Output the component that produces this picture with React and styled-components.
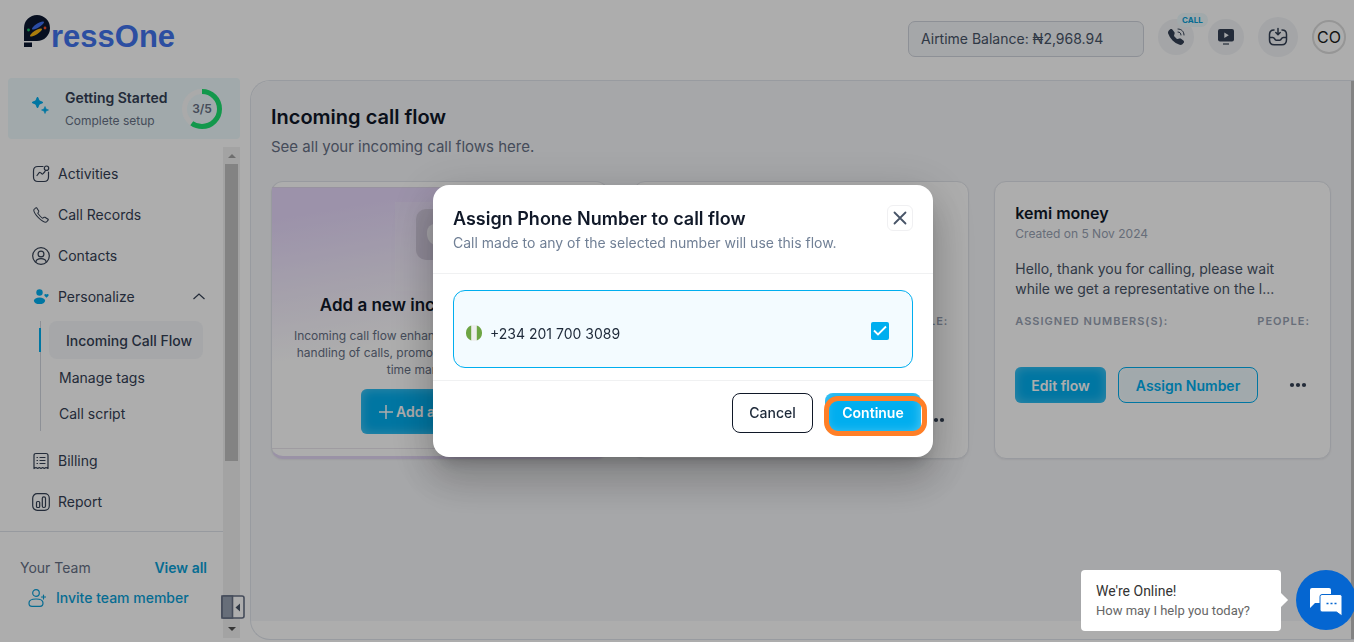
import styled, { createGlobalStyle } from "styled-components";
import { BsTelephoneFill } from "react-icons/bs";
import { SlPhone } from "react-icons/sl";

const GlobalStyle = createGlobalStyle`
  * {
    box-sizing: border-box;
  }

  body {
    margin: 0;
    background-color: #ffffff;
    font-family: Inter, "Liberation Sans", sans-serif;
    font-size: 14px;
    color: #344054;
    overflow: hidden;
  }

  button {
    font-family: inherit;
    cursor: pointer;
  }

  a {
    color: inherit;
    text-decoration: none;
  }

  h1, h2, h3, p {
    margin: 0;
  }
`;

const LogoMark = () => (
  <svg width="27" height="33" viewBox="0 0 27 33" aria-hidden="true">
    <path
      d="M0 26V13A13 13 0 0 1 13 0a13 13 0 0 1 0 26ZM0 27.500h8V32H0Z"
      fill="#0b1730"
    />
    <ellipse cx="14" cy="10.500" rx="7" ry="2" transform="rotate(-32 14 10.500)" fill="#3f70f4" />
    <ellipse cx="12" cy="17.500" rx="7" ry="2" transform="rotate(-32 12 17.500)" fill="#fdb913" />
    <circle cx="4.500" cy="15" r="1.400" fill="#1fc46b" />
    <circle cx="21" cy="13" r="1.400" fill="#f0502d" />
  </svg>
);

const SparkleIcon = () => (
  <svg width="18" height="18" viewBox="0 0 18 18" fill="#00aeef" aria-hidden="true">
    <path d="M6.500 1 8.200 4.800 12 6.500 8.200 8.200 6.500 12 4.800 8.200 1 6.500 4.800 4.800Z" stroke="#00aeef" strokeLinejoin="round" />
    <path d="M14 10.500 15 13 17.500 14 15 15 14 17.500 13 15 10.500 14 13 13Z" stroke="#00aeef" strokeWidth=".6" strokeLinejoin="round" />
  </svg>
);

const lineProps = {
  width: 18,
  height: 18,
  viewBox: "0 0 18 18",
  fill: "none",
  stroke: "currentColor",
  strokeWidth: 1.2,
  strokeLinecap: "round",
  strokeLinejoin: "round",
  "aria-hidden": true,
};

const ActivityIcon = () => (
  <svg {...lineProps}>
    <path d="M11 1.500H6C2.700 1.500 1.500 2.700 1.500 6v6c0 3.300 1.200 4.500 4.500 4.500h6c3.300 0 4.500-1.200 4.500-4.500V7" />
    <circle cx="14.500" cy="3.200" r="2.200" />
    <path d="m5 10.500 2.200-2.800c.4-.5.9-.5 1.300-.1l1.300 1.200c.4.400.9.300 1.300-.1L13 6.500" />
  </svg>
);

const ContactIcon = () => (
  <svg {...lineProps}>
    <circle cx="9" cy="9" r="8.300" />
    <circle cx="9" cy="7" r="2.900" />
    <path d="M3.800 15c.5-2.300 2.600-3.300 5.200-3.300s4.700 1 5.200 3.300" />
  </svg>
);

const PersonalizeIcon = () => (
  <svg width="18" height="18" viewBox="0 0 18 18" fill="#00aeef" aria-hidden="true">
    <circle cx="7.500" cy="4.500" r="3.200" />
    <ellipse cx="7.500" cy="12.800" rx="5.600" ry="3.300" />
    <path d="M14.500 9.800 12.700 8c-1.200-1.400.8-2.700 1.800-1.400 1-1.300 3 0 1.800 1.400Z" />
  </svg>
);

const BillingIcon = () => (
  <svg {...lineProps}>
    <path d="M2 3.500c0-1.500.7-2 2-2h10c1.300 0 2 .5 2 2v13l-2-1-1.700 1-1.600-1L9 16.500l-1.700-1-1.600 1-1.700-1-2 1Z" />
    <path d="M8 5.500h5M8 8.500h5M8 11.500h5M5 5.500h.5M5 8.500h.5M5 11.500h.5" />
  </svg>
);

const ReportIcon = () => (
  <svg {...lineProps}>
    <rect x=".7" y=".7" width="16.600" height="16.600" rx="4.500" />
    <rect x="4.500" y="8.500" width="3.200" height="6" rx="1" />
    <rect x="10.300" y="3.800" width="3.200" height="10.700" rx="1.500" />
  </svg>
);

const InviteIcon = () => (
  <svg {...lineProps}>
    <circle cx="8" cy="4" r="3.300" />
    <path d="M8 10c4 0 7 1.200 7 4s-1.200 3.400-3 3.400H4c-1.800 0-3-.6-3-3.400s3-4 7-4ZM15.500 6v4M13.500 8h4" />
  </svg>
);

const ChevronUpIcon = () => (
  <svg width="12" height="8" viewBox="0 0 12 8" fill="none" stroke="currentColor" strokeWidth="1.200" aria-hidden="true">
    <path d="M.5 6 6 1 11.500 6" />
  </svg>
);

const CallWaveIcon = () => (
  <svg width="8" height="8" viewBox="0 0 8 8" fill="none" stroke="currentColor" strokeLinecap="round" aria-hidden="true">
    <path d="M1 1c3.500 0 6 2.500 6 6M1 4c1.800 0 3 1.200 3 3" />
  </svg>
);

const VideoIcon = () => (
  <svg width="18" height="18" viewBox="0 0 18 18" aria-hidden="true">
    <rect x="1" y="1" width="16" height="12.500" rx="2" fill="currentColor" />
    <path d="m7.300 4.500 4.500 2.800-4.500 2.800Z" fill="#f2f4f7" />
    <path d="M6 16h6" stroke="currentColor" strokeWidth="1.200" />
  </svg>
);

const InboxIcon = () => (
  <svg {...lineProps} width="20" height="20" viewBox="0 0 20 20" strokeWidth="1.500">
    <path d="M10 1.500v6M7.800 5.500 10 7.700l2.200-2.200M6 3C2.800 3 1.500 4.500 1.500 7.500v5.300c0 3.500 1.400 5 4.700 5h7.600c3.300 0 4.700-1.500 4.700-5V7.500C18.500 4.500 17.200 3 14 3" />
    <path d="M1.700 10.500h3c.8 0 1.400.4 1.800 1.200.5 1 1 1.500 1.700 1.500h3.600c.7 0 1.200-.5 1.700-1.500.4-.8 1-1.200 1.800-1.200h3" />
  </svg>
);

const CloseIcon = () => (
  <svg width="14" height="14" viewBox="0 0 14 14" stroke="#475467" strokeWidth="1.800" strokeLinecap="round" aria-hidden="true">
    <path d="m1.500 1.500 11 11M12.500 1.500l-11 11" />
  </svg>
);

const DotsIcon = () => (
  <svg width="18" height="6" viewBox="0 0 18 6" fill="#344054" aria-hidden="true">
    <circle cx="3" cy="3" r="2.100" />
    <circle cx="9" cy="3" r="2.100" />
    <circle cx="15" cy="3" r="2.100" />
  </svg>
);

const PlusIcon = () => (
  <svg width="14" height="14" viewBox="0 0 14 14" stroke="#ffffff" strokeWidth="1.500" aria-hidden="true">
    <path d="M7 0v14M0 7h14" />
  </svg>
);

const FlagIcon = () => (
  <svg width="16" height="16" viewBox="0 0 16 16" aria-hidden="true">
    <circle cx="8" cy="8" r="8" fill="#eeeeee" />
    <path d="M5.200.5a8 8 0 0 0 0 15ZM10.800.5a8 8 0 0 1 0 15Z" fill="#6da544" />
  </svg>
);

const CollapseIcon = () => (
  <svg width="24" height="24" viewBox="0 0 24 24" aria-hidden="true">
    <rect x="1" y="1" width="22" height="22" rx="2" fill="#ffffff" stroke="#667085" strokeWidth="1.600" />
    <path d="M1 1h10.500v22H1Z" fill="#98a2b3" stroke="#667085" strokeWidth="1.600" />
    <path d="m19 8.500-4.500 4 4.500 4Z" fill="#475467" />
  </svg>
);

const ChatIcon = () => (
  <svg width="32" height="28" viewBox="0 0 32 28" aria-hidden="true">
    <path d="M2 0h17a2 2 0 0 1 2 2v13H5l-5 5V2a2 2 0 0 1 2-2Z" fill="#ffffff" />
    <path d="M12 6.500h18a2 2 0 0 1 2 2V28l-5.500-4H12a2 2 0 0 1-2-2V8.500a2 2 0 0 1 2-2Z" fill="#ffffff" stroke="#0566d1" />
    <path d="M16.500 15.500h2M20.500 15.500h2M24.500 15.500h2" stroke="#0566d1" strokeWidth="1.600" />
  </svg>
);

const FlowCard = ({ name, created, message, assigned }) => (
  <Card>
    <CardTitle>{name}</CardTitle>
    <CardDate>{created}</CardDate>
    <CardMessage>{message}</CardMessage>
    <CardLabels>
      <span>ASSIGNED NUMBERS(S):</span>
      <span>PEOPLE:</span>
    </CardLabels>
    <CardActions $assigned={assigned}>
      <PrimaryButton>Edit flow</PrimaryButton>
      <AssignButton>Assign Number</AssignButton>
      <MoreButton aria-label="More options">
        <DotsIcon />
      </MoreButton>
    </CardActions>
  </Card>
);

const Sidebar = () => (
  <Aside>
    <Logo href="#home">
      <LogoMark />
      <span>ressOne</span>
    </Logo>
    <GettingStarted href="#setup">
      <SparkleIcon />
      <GettingStartedText>
        <strong>Getting Started</strong>
        <span>Complete setup</span>
      </GettingStartedText>
      <Progress>
        <svg width="40" height="40" viewBox="0 0 40 40" fill="none" strokeWidth="5" aria-hidden="true">
          <circle cx="20" cy="20" r="17.500" stroke="#fbfbfb" />
          <circle cx="20" cy="20" r="17.500" stroke="#1ce070" pathLength="100" strokeDasharray="60 40" transform="rotate(-90 20 20)" />
        </svg>
        <span>3/5</span>
      </Progress>
    </GettingStarted>
    <SidebarScroll>
      <SidebarContent>
        <Nav>
          <NavItem href="#activities"><ActivityIcon />Activities</NavItem>
          <NavItem href="#records"><SlPhone size={16} />Call Records</NavItem>
          <NavItem href="#contacts"><ContactIcon />Contacts</NavItem>
          <NavItem href="#personalize">
            <PersonalizeIcon />
            <NavItemName>Personalize</NavItemName>
            <ChevronUpIcon />
          </NavItem>
          <SubNav>
            <SubNavItem href="#flow" $active>Incoming Call Flow</SubNavItem>
            <SubNavItem href="#tags">Manage tags</SubNavItem>
            <SubNavItem href="#script">Call script</SubNavItem>
          </SubNav>
          <NavItem href="#billing"><BillingIcon />Billing</NavItem>
          <NavItem href="#report"><ReportIcon />Report</NavItem>
        </Nav>
        <Team>
          <TeamHeader>
            <span>Your Team</span>
            <TeamLink href="#team">View all</TeamLink>
          </TeamHeader>
          <InviteLink href="#invite"><InviteIcon />Invite team member</InviteLink>
        </Team>
      </SidebarContent>
      <ScrollTrack>
        <ScrollArrow $up />
        <ScrollThumb />
        <ScrollArrow />
      </ScrollTrack>
      <CollapseButton aria-label="Collapse sidebar">
        <CollapseIcon />
      </CollapseButton>
    </SidebarScroll>
  </Aside>
);

const AssignModal = () => (
  <Overlay>
    <Modal role="dialog" aria-labelledby="assign-title">
      <ModalHeader>
        <div>
          <ModalTitle id="assign-title">Assign Phone Number to call flow</ModalTitle>
          <ModalSubtitle>
            Call made to any of the selected number will use this flow.
          </ModalSubtitle>
        </div>
        <CloseButton aria-label="Close">
          <CloseIcon />
        </CloseButton>
      </ModalHeader>
      <ModalBody>
        <NumberOption htmlFor="number">
          <FlagIcon />
          <NumberText>+234 201 700 3089</NumberText>
          <Checkbox id="number" type="checkbox" defaultChecked />
        </NumberOption>
      </ModalBody>
      <ModalFooter>
        <CancelButton>Cancel</CancelButton>
        <ContinueWrap>
          <ContinueButton>Continue</ContinueButton>
          <Highlight />
        </ContinueWrap>
      </ModalFooter>
    </Modal>
  </Overlay>
);

const App = () => {
  return (
    <>
      <GlobalStyle />
      <Page>
        <Sidebar />
        <Main>
          <Header>
            <Balance>Airtime Balance: ₦2,968.94</Balance>
            <RoundButton aria-label="Call">
              <BsTelephoneFill size={16} />
              <Waves><CallWaveIcon /></Waves>
              <CallBadge>CALL</CallBadge>
            </RoundButton>
            <RoundButton aria-label="Videos">
              <VideoIcon />
            </RoundButton>
            <RoundButton $size={40} aria-label="Inbox">
              <InboxIcon />
            </RoundButton>
            <Avatar>CO</Avatar>
          </Header>
          <Panel>
            <PanelContent>
              <PageTitle>Incoming call flow</PageTitle>
              <PageSubtitle>See all your incoming call flows here.</PageSubtitle>
              <Cards>
                <NewCard>
                  <NewCardBody>
                    <NewCardArt>
                      <NewCardTile>
                        <NewCardShape />
                      </NewCardTile>
                    </NewCardArt>
                    <NewCardTitle>Add a new incoming call flow</NewCardTitle>
                    <NewCardText>
                      Incoming call flow enhances the efficient and quick
                      <br />
                      handling of calls, promoting quick response times,
                      <br />
                      time management.
                    </NewCardText>
                    <AddButton>
                      <PlusIcon />
                      Add a new flow
                    </AddButton>
                  </NewCardBody>
                </NewCard>
                <FlowCard assigned />
                <FlowCard
                  name="kemi money"
                  created="Created on 5 Nov 2024"
                  message="Hello, thank you for calling, please wait while we get a representative on the l..."
                />
              </Cards>
            </PanelContent>
            <PanelScroll />
          </Panel>
        </Main>
      </Page>
      <AssignModal />
      <Chat>
        <ChatBubble>
          <ChatTitle>We're Online!</ChatTitle>
          <ChatText>How may I help you today?</ChatText>
        </ChatBubble>
        <ChatButton aria-label="Open chat">
          <ChatIcon />
        </ChatButton>
      </Chat>
    </>
  );
};

export default App;

const Page = styled.div`
  display: grid;
  grid-template-columns: 240px 1fr;
  column-gap: 10px;
  min-height: 100vh;
`;

const Aside = styled.aside`
  display: flex;
  flex-direction: column;
  padding-bottom: 4px;
`;

const Logo = styled.a`
  display: flex;
  height: 78px;
  padding: 15px 0 0 24px;
  font-family: "Liberation Sans", sans-serif;
  font-size: 31px;
  font-weight: 700;
  line-height: 43px;
  color: #4173ee;
`;

const GettingStarted = styled.a`
  display: flex;
  align-items: center;
  height: 61px;
  margin-left: 8px;
  padding: 0 18px 0 23px;
  border-radius: 4px;
  background-color: #edfafc;

  > svg {
    margin-bottom: 8px;
  }
`;

const GettingStartedText = styled.div`
  display: flex;
  flex: 1;
  flex-direction: column;
  margin-left: 16px;
  line-height: 23px;

  strong {
    font-size: 14px;
    font-weight: 600;
  }

  span {
    font-size: 12px;
    color: #667085;
  }
`;

const Progress = styled.div`
  display: grid;
  place-items: center;
  font-size: 12px;
  font-weight: 600;
  color: #667085;

  > * {
    grid-area: 1 / 1;
  }
`;

const SidebarScroll = styled.div`
  position: relative;
  display: flex;
  flex: 1;
  margin-top: 8px;
`;

const SidebarContent = styled.div`
  flex: 1;
`;

const Nav = styled.nav`
  padding: 6px 0 9px;
  border-bottom: 1px solid #dfe3ea;
`;

const NavItem = styled.a`
  display: flex;
  align-items: center;
  gap: 8px;
  height: 41px;
  padding: 0 18px 0 32px;

  > svg:first-child {
    width: 18px;
  }
`;

const NavItemName = styled.span`
  flex: 1;
`;

const SubNav = styled.div`
  margin: 4px 20px 9px 40px;
  border-left: 1px solid #d0d5dd;
`;

const SubNavItem = styled.a`
  position: relative;
  display: flex;
  align-items: center;
  height: ${({ $active }) => ($active ? "38px" : "36px")};
  margin-left: ${({ $active }) => ($active ? "8px" : "0")};
  padding-left: ${({ $active }) => ($active ? "17px" : "18px")};
  border-radius: 8px;
  background-color: ${({ $active }) => ($active ? "#f5f7fa" : "transparent")};
  font-weight: ${({ $active }) => ($active ? 500 : 400)};

  &::before {
    content: "";
    display: ${({ $active }) => ($active ? "block" : "none")};
    position: absolute;
    left: -10px;
    width: 2px;
    height: 24px;
    background-color: #00aeef;
  }
`;

const Team = styled.div`
  padding: 24px 16px 0 20px;
`;

const TeamHeader = styled.div`
  display: flex;
  justify-content: space-between;
  line-height: 24px;
  color: #667085;
`;

const TeamLink = styled.a`
  font-weight: 600;
  color: #0a9fd8;
`;

const InviteLink = styled.a`
  display: flex;
  align-items: center;
  gap: 10px;
  margin: 6px 0 0 8px;
  line-height: 24px;
  font-weight: 500;
  color: #0a9fd8;
`;

const ScrollTrack = styled.div`
  display: flex;
  flex-direction: column;
  align-items: center;
  width: 17px;
  background-color: #f1f1f1;
`;

const ScrollArrow = styled.span`
  width: 0;
  margin: ${({ $up }) => ($up ? "7px 0 6px" : "auto 0 7px")};
  border: 4px solid transparent;
  border-top: ${({ $up }) => ($up ? "0" : "4px solid #505050")};
  border-bottom: ${({ $up }) => ($up ? "4px solid #a3a3a3" : "0")};
`;

const ScrollThumb = styled.div`
  width: 13px;
  height: 297px;
  background-color: #c1c1c1;
`;

const CollapseButton = styled.button`
  position: absolute;
  right: -5px;
  bottom: 19px;
  display: flex;
  padding: 0;
  border: 0;
  background: none;
`;

const Main = styled.main`
  display: flex;
  flex-direction: column;
`;

const Header = styled.header`
  display: flex;
  align-items: center;
  justify-content: flex-end;
  gap: 14px;
  height: 80px;
  padding: 0 8px 6px 0;
`;

const Balance = styled.div`
  width: 236px;
  height: 36px;
  margin-top: 4px;
  padding-left: 12px;
  border: 1px solid #d0d5dd;
  border-radius: 7px;
  background-color: #f4f6f9;
  line-height: 33px;
  color: #475467;
`;

const RoundButton = styled.button`
  position: relative;
  display: flex;
  align-items: center;
  justify-content: center;
  width: ${({ $size }) => $size || 36}px;
  height: ${({ $size }) => $size || 36}px;
  padding: 0;
  border: 0;
  border-radius: 50%;
  background-color: #f2f4f7;
  color: #344054;
`;

const Waves = styled.span`
  position: absolute;
  top: 9px;
  right: 9px;
  line-height: 0;
`;

const CallBadge = styled.span`
  position: absolute;
  top: -6px;
  left: 19px;
  padding: 0 5px;
  border-radius: 7px;
  background-color: #edfafc;
  font-size: 8px;
  font-weight: 700;
  line-height: 14px;
  color: #0a9fd8;
`;

const Avatar = styled.div`
  width: 34px;
  height: 34px;
  border: 2px solid #dddddd;
  border-radius: 50%;
  font-size: 16px;
  line-height: 30px;
  text-align: center;
  color: #1d1d1d;
`;

const Panel = styled.section`
  display: flex;
  flex: 1;
  margin-bottom: 2px;
  padding-bottom: 18px;
  border: 1px solid #e1e5ec;
  border-right: 0;
  border-radius: 20px 0 0 20px;
`;

const PanelContent = styled.div`
  flex: 1;
  padding: 20px;
  border-radius: 20px 0 0 0;
  background-color: #f5f6f9;
`;

const PanelScroll = styled.div`
  width: 3px;
  margin-bottom: -18px;
  background-color: #c1c1c1;
`;

const PageTitle = styled.h1`
  font-size: 20px;
  font-weight: 600;
  line-height: 32px;
  color: #101828;
`;

const PageSubtitle = styled.p`
  font-size: 15px;
  line-height: 28px;
  color: #667085;
`;

const Cards = styled.div`
  display: grid;
  grid-template-columns: repeat(3, 1fr);
  gap: 25px;
  margin-top: 20px;
`;

const Card = styled.article`
  min-height: 278px;
  padding: 20px;
  border: 1px solid #e1e4ea;
  border-radius: 12px;
  background-color: #ffffff;
  box-shadow: 0 1px 2px rgba(16, 24, 40, 0.06);
`;

const NewCard = styled(Card)`
  padding: 5px 0 7px;
  border-bottom: 3px solid #e3d8f5;
`;

const NewCardBody = styled.div`
  display: flex;
  flex-direction: column;
  align-items: center;
  height: 100%;
  border-top: 1px solid #e0d8ec;
  border-bottom: 1px solid #eae6ee;
  background: linear-gradient(170deg, #e6d8fb 10%, #ffffff 55%);
`;

const NewCardArt = styled.div`
  display: flex;
  justify-content: center;
  width: 88px;
  height: 89px;
  margin-top: 14px;
  padding-top: 7px;
  background-color: rgba(255, 255, 255, 0.16);
`;

const NewCardTile = styled.div`
  display: grid;
  place-items: center;
  width: 46px;
  height: 51px;
  border-radius: 10px;
  background-color: #d4cce0;
`;

const NewCardShape = styled.span`
  width: 24px;
  height: 22px;
  border-radius: 8px 8px 12px 12px;
  background-color: #f4f1f8;
`;

const NewCardTitle = styled.h2`
  font-size: 17px;
  font-weight: 600;
  line-height: 28px;
  color: #101828;
`;

const NewCardText = styled.p`
  margin-top: 8px;
  font-size: 12px;
  line-height: 17px;
  text-align: center;
  color: #667085;
`;

const CardTitle = styled.h2`
  min-height: 23px;
  font-size: 16px;
  font-weight: 600;
  line-height: 23px;
  color: #101828;
`;

const CardDate = styled.p`
  min-height: 18px;
  font-size: 12px;
  line-height: 18px;
  color: #98a2b3;
`;

const CardMessage = styled.p`
  min-height: 40px;
  margin: 16px 0 12px;
  max-width: 264px;
  line-height: 20px;
  color: #475467;
`;

const CardLabels = styled.div`
  display: flex;
  justify-content: space-between;
  font-size: 11px;
  font-weight: 600;
  line-height: 20px;
  letter-spacing: 1px;
  color: #98a2b3;
`;

const CardActions = styled.div`
  display: flex;
  align-items: center;
  gap: 12px;
  margin-top: ${({ $assigned }) => ($assigned ? "71px" : "36px")};
`;

const PrimaryButton = styled.button`
  height: 36px;
  padding: 0 16px;
  border: 0;
  border-radius: 6px;
  background-color: #00aeef;
  box-shadow: inset 0 0 12px rgba(255, 255, 255, 0.35);
  font-size: 14px;
  font-weight: 600;
  color: #ffffff;
`;

const AssignButton = styled(PrimaryButton)`
  padding: 0 17px;
  border: 1px solid #00aeef;
  border-radius: 8px;
  background-color: #edfafe;
  color: #00aeef;
`;

const MoreButton = styled.button`
  display: flex;
  margin-left: auto;
  padding: 3px;
  border: 0;
  background: none;
`;

const AddButton = styled(PrimaryButton)`
  display: flex;
  align-items: center;
  gap: 3px;
  height: 45px;
  margin-top: 11px;
  padding: 0 18px;
`;

const Overlay = styled.div`
  position: fixed;
  inset: 0;
  display: flex;
  align-items: center;
  justify-content: center;
  padding-left: 12px;
  background-color: rgba(0, 0, 0, 0.32);
`;

const Modal = styled.div`
  width: 500px;
  padding-bottom: 24px;
  border-radius: 16px;
  background-color: #ffffff;
  box-shadow: 0 11px 15px -7px rgba(0, 0, 0, 0.2),
    0 24px 38px 3px rgba(0, 0, 0, 0.14), 0 9px 46px 8px rgba(0, 0, 0, 0.12);
`;

const ModalHeader = styled.div`
  display: flex;
  align-items: flex-start;
  justify-content: space-between;
  padding: 20px 20px 19px;
  border-bottom: 1px solid #f0f1f2;
`;

const ModalTitle = styled.h2`
  font-size: 18px;
  font-weight: 600;
  line-height: 27px;
  color: #101828;
`;

const ModalSubtitle = styled.p`
  line-height: 22px;
  color: #718096;
`;

const CloseButton = styled.button`
  display: flex;
  align-items: center;
  justify-content: center;
  width: 26px;
  height: 26px;
  padding: 0;
  border: 1px solid #f0f0f2;
  border-radius: 6px;
  background-color: #ffffff;
`;

const ModalBody = styled.div`
  padding: 16px 20px 12px;
  border-bottom: 1px solid #f0f1f2;
`;

const NumberOption = styled.label`
  display: flex;
  align-items: center;
  height: 78px;
  padding: 8px 23px 0 12px;
  border: 1px solid #00aeef;
  border-radius: 12px;
  background-color: #f3fbff;
  color: #1d2939;
`;

const NumberText = styled.span`
  flex: 1;
  margin-left: 8px;
`;

const Checkbox = styled.input`
  width: 18px;
  height: 18px;
  margin: 0 0 4px;
  border-radius: 2px;
  appearance: none;
  background-color: #00aeef;

  &:checked {
    background-image: url("data:image/svg+xml,%3Csvg xmlns='http://www.w3.org/2000/svg' viewBox='0 0 18 18' fill='none' stroke='white' stroke-width='1.800'%3E%3Cpath d='m3 8.500 4 4 8-8'/%3E%3C/svg%3E");
  }
`;

const ModalFooter = styled.div`
  display: flex;
  justify-content: flex-end;
  gap: 12px;
  padding: 12px 12px 0;
`;

const CancelButton = styled.button`
  width: 81px;
  height: 40px;
  padding: 0 0 2px;
  border: 1px solid #101828;
  border-radius: 8px;
  background-color: #ffffff;
  font-size: 14px;
  font-weight: 500;
  color: #1d2939;
`;

const ContinueWrap = styled.div`
  position: relative;
`;

const ContinueButton = styled(PrimaryButton)`
  width: 96px;
  height: 40px;
  padding: 0 0 2px;
  border-radius: 8px;
`;

const Highlight = styled.span`
  position: absolute;
  inset: 3px -6px -3px -1px;
  border: 5px solid #ff7f27;
  border-radius: 14px;
  pointer-events: none;
`;

const Chat = styled.div`
  position: fixed;
  right: -2px;
  bottom: 11px;
  display: flex;
  gap: 15px;
  font-family: Roboto, sans-serif;
`;

const ChatBubble = styled.div`
  position: relative;
  width: 200px;
  padding: 11px 15px;
  border-radius: 4px;
  background-color: #ffffff;

  &::after {
    content: "";
    position: absolute;
    top: 25px;
    right: -5px;
    width: 10px;
    height: 10px;
    background-color: #ffffff;
    transform: rotate(45deg);
  }
`;

const ChatTitle = styled.p`
  line-height: 20px;
  color: #333333;
`;

const ChatText = styled.p`
  font-size: 13px;
  line-height: 19px;
  color: #666666;
`;

const ChatButton = styled.button`
  display: flex;
  align-items: center;
  justify-content: center;
  width: 60px;
  height: 60px;
  padding: 4px 0 0;
  border: 0;
  border-radius: 50%;
  background-color: #0566d1;
`;
